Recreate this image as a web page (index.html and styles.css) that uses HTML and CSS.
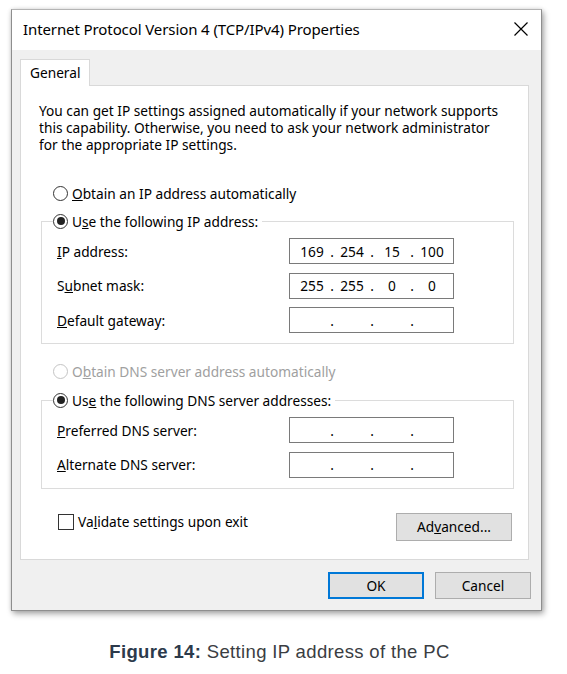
FILE: index.html
```html
<!DOCTYPE html>
<html lang="en">
<head>
<meta charset="utf-8">
<title>Internet Protocol Version 4 (TCP/IPv4) Properties</title>
<link rel="stylesheet" href="styles.css">
</head>
<body>
<div class="dialog">
  <div class="titlebar">
    <span class="title">Internet Protocol Version 4 (TCP/IPv4) Properties</span>
    <svg class="close" width="16" height="16" viewBox="0 0 16 16"><path d="M1.5 1.5 L14.5 14.5 M14.5 1.5 L1.5 14.5" stroke="#000" stroke-width="1.2" fill="none"/></svg>
  </div>
  <div class="body">
    <div class="tabs"><div class="tab">General</div></div>
    <div class="panel">
      <p class="desc">You can get IP settings assigned automatically if your network supports this capability. Otherwise, you need to ask your network administrator for the appropriate IP settings.</p>

      <div class="option first"><span class="radio"></span><span><u>O</u>btain an IP address automatically</span></div>
      <fieldset class="group ipgroup">
        <legend class="option"><span class="radio checked"></span><span>U<u>s</u>e the following IP address:</span></legend>
        <div class="row"><span><u>I</u>P address:</span>
          <div class="ip"><span class="seg">169</span><span class="dot">.</span><span class="seg">254</span><span class="dot">.</span><span class="seg">15</span><span class="dot">.</span><span class="seg">100</span></div>
        </div>
        <div class="row"><span>S<u>u</u>bnet mask:</span>
          <div class="ip"><span class="seg">255</span><span class="dot">.</span><span class="seg">255</span><span class="dot">.</span><span class="seg">0</span><span class="dot">.</span><span class="seg">0</span></div>
        </div>
        <div class="row"><span><u>D</u>efault gateway:</span>
          <div class="ip"><span class="seg"></span><span class="dot">.</span><span class="seg"></span><span class="dot">.</span><span class="seg"></span><span class="dot">.</span><span class="seg"></span></div>
        </div>
      </fieldset>

      <div class="option second disabled"><span class="radio"></span><span>O<u>b</u>tain DNS server address automatically</span></div>
      <fieldset class="group dnsgroup">
        <legend class="option"><span class="radio checked"></span><span>Us<u>e</u> the following DNS server addresses:</span></legend>
        <div class="row"><span><u>P</u>referred DNS server:</span>
          <div class="ip"><span class="seg"></span><span class="dot">.</span><span class="seg"></span><span class="dot">.</span><span class="seg"></span><span class="dot">.</span><span class="seg"></span></div>
        </div>
        <div class="row"><span><u>A</u>lternate DNS server:</span>
          <div class="ip"><span class="seg"></span><span class="dot">.</span><span class="seg"></span><span class="dot">.</span><span class="seg"></span><span class="dot">.</span><span class="seg"></span></div>
        </div>
      </fieldset>

      <div class="bottom">
        <div class="option check"><span class="checkbox"></span><span>Va<u>l</u>idate settings upon exit</span></div>
        <button class="btn advanced">Ad<u>v</u>anced...</button>
      </div>
    </div>
    <div class="footer">
      <button class="btn default">OK</button>
      <button class="btn">Cancel</button>
    </div>
  </div>
</div>
<p class="caption"><strong>Figure 14:</strong> Setting IP address of the PC</p>
</body>
</html>
```
FILE: styles.css
```css
html, body {
  margin: 0;
  padding: 0;
  background: #ffffff;
}
body {
  width: 567px;
  height: 674px;
  padding-top: 9px;
  box-sizing: border-box;
  font-family: "Noto Sans", "Open Sans", sans-serif;
  color: #000;
}
.dialog {
  margin-left: 11px;
  width: 531px;
  height: 602px;
  box-sizing: border-box;
  border: 1px solid #8e8e8e;
  border-top-color: #b4b4b4;
  background: #f0f0f0;
  box-shadow: 2px 3px 6px rgba(0, 0, 0, 0.33), 0 0 4px rgba(0, 0, 0, 0.12);
}
.titlebar {
  height: 40px;
  background: #ffffff;
  display: flex;
  align-items: center;
  justify-content: space-between;
  padding: 0 12px 2px 11px;
  box-sizing: border-box;
}
.title {
  font-size: 15px;
  letter-spacing: -0.1px;
}
.close {
  display: block;
  width: 16px;
  height: 16px;
}
.body {
  padding: 9px 10px 0 8px;
}
.tabs {
  display: flex;
  position: relative;
  z-index: 1;
  margin-bottom: -1px;
}
.tab {
  width: 70px;
  height: 27px;
  box-sizing: border-box;
  border: 1px solid #d9d9d9;
  border-bottom: none;
  background: #ffffff;
  font-size: 13.7px;
  display: flex;
  align-items: center;
  padding-left: 9px;
  padding-bottom: 1px;
}
.panel {
  width: 509px;
  height: 475px;
  box-sizing: border-box;
  border: 1px solid #d9d9d9;
  background: #ffffff;
  padding: 16px 0 0 18px;
  font-size: 13.7px;
}
.desc {
  margin: 0;
  line-height: 17px;
  width: 464px;
}
.option {
  display: flex;
  align-items: center;
  height: 20px;
  gap: 4px;
  white-space: nowrap;
}
.option.first {
  margin: 30px 0 0 14px;
}
.option.second {
  margin: 17px 0 0 14px;
}
.disabled {
  color: #a0a0a0;
}
.radio {
  width: 15px;
  height: 15px;
  box-sizing: border-box;
  border: 1px solid #333;
  border-radius: 50%;
  display: flex;
  align-items: center;
  justify-content: center;
  flex: none;
}
.disabled .radio {
  border-color: #c4c4c4;
}
.radio.checked::after {
  content: "";
  width: 8px;
  height: 8px;
  border-radius: 50%;
  background: #222;
}
.group {
  margin: 8px 0 0 2px;
  width: 473px;
  box-sizing: border-box;
  border: 1px solid #dcdcdc;
  padding: 7px 0 10px 15px;
  display: flex;
  flex-direction: column;
  gap: 8.5px;
}
.group.dnsgroup {
  margin-top: 9px;
}
.group legend {
  margin-left: -4px;
  padding: 0 4px 0 0;
}
.row {
  display: grid;
  grid-template-columns: 232px 165px;
  align-items: center;
}
.ip {
  height: 26px;
  box-sizing: border-box;
  border: 1px solid #7a7a7a;
  display: flex;
  align-items: center;
  padding-left: 5px;
}
.seg {
  width: 34px;
  text-align: center;
}
.dot {
  width: 6px;
  text-align: center;
}
.bottom {
  margin: 23px 0 0 19px;
  width: 454px;
  display: flex;
  justify-content: space-between;
  align-items: flex-start;
}
.checkbox {
  width: 16px;
  height: 16px;
  box-sizing: border-box;
  border: 1px solid #333;
  flex: none;
}
.btn {
  font-family: "Noto Sans", "Open Sans", sans-serif;
  font-size: 13.7px;
  color: #000;
  background: #e1e1e1;
  border: 1px solid #adadad;
  box-sizing: border-box;
  padding: 0;
  margin: 0;
}
.advanced {
  width: 116px;
  height: 28px;
  margin-top: 1px;
}
.footer {
  display: flex;
  justify-content: flex-end;
  gap: 11px;
  margin-top: 12px;
}
.footer .btn {
  width: 96px;
  height: 27px;
}
.btn.default {
  border: 2px solid #0078d7;
}
.caption {
  margin: 30px 0 0 0;
  width: 567px;
  padding-right: 8px;
  box-sizing: border-box;
  text-align: center;
  font-family: "Liberation Sans", Arial, sans-serif;
  font-size: 18.5px;
  color: #3a3d42;
  letter-spacing: 0.35px;
}
.caption strong {
  color: #2c3a4b;
}
```
